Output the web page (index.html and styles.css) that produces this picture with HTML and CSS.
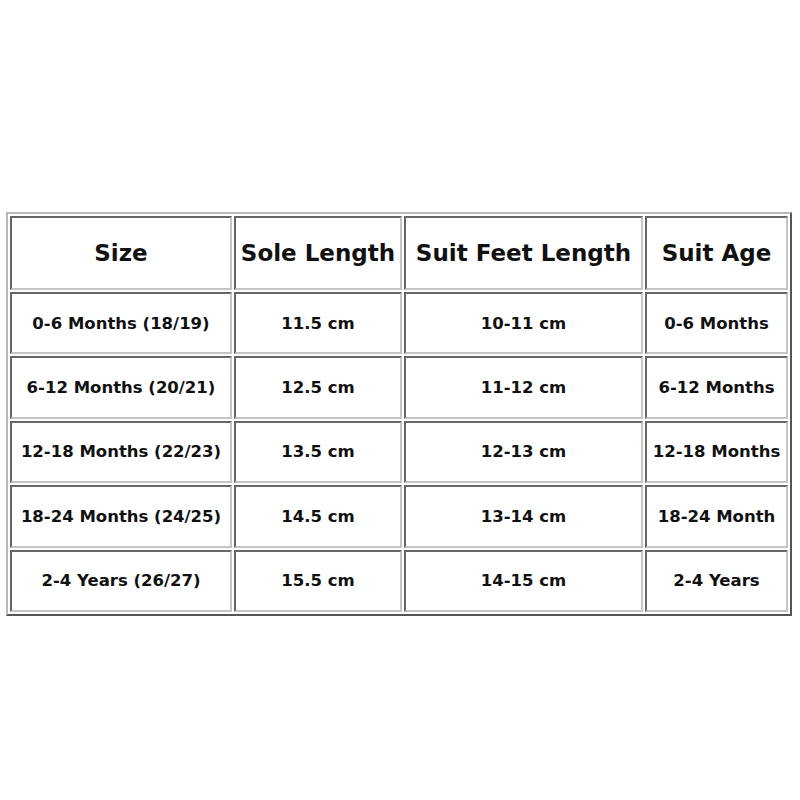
FILE: index.html
```html
<!DOCTYPE html>
<html>
<head>
<meta charset="utf-8">
<link rel="stylesheet" href="styles.css">
</head>
<body>
<div class="page">
  <table class="chart">
    <colgroup>
      <col class="c1"><col class="c2"><col class="c3"><col class="c4">
    </colgroup>
    <thead>
      <tr class="head">
        <th>Size</th>
        <th>Sole Length</th>
        <th>Suit Feet Length</th>
        <th>Suit Age</th>
      </tr>
    </thead>
    <tbody>
      <tr><td>0-6 Months (18/19)</td><td>11.5 cm</td><td>10-11 cm</td><td>0-6 Months</td></tr>
      <tr><td>6-12 Months (20/21)</td><td>12.5 cm</td><td>11-12 cm</td><td>6-12 Months</td></tr>
      <tr><td>12-18 Months (22/23)</td><td>13.5 cm</td><td>12-13 cm</td><td>12-18 Months</td></tr>
      <tr><td>18-24 Months (24/25)</td><td>14.5 cm</td><td>13-14 cm</td><td>18-24 Month</td></tr>
      <tr><td>2-4 Years (26/27)</td><td>15.5 cm</td><td>14-15 cm</td><td>2-4 Years</td></tr>
    </tbody>
  </table>
</div>
</body>
</html>
```
FILE: styles.css
```css
html, body {
  margin: 0;
  padding: 0;
  background: #ffffff;
}
.page {
  width: 800px;
  height: 800px;
  padding: 212px 0 0 6px;
  box-sizing: border-box;
}
.chart {
  width: 786px;
  border-collapse: separate;
  border-spacing: 2px;
  border: 2px solid;
  border-color: #b8b8b8 #555 #555 #b8b8b8;
  table-layout: fixed;
  font-family: "DejaVu Sans", sans-serif;
  font-weight: bold;
  color: #111;
}
.c1 { width: 222px; }
.c2 { width: 168px; }
.c3 { width: 239px; }
.c4 { width: 143px; }
.chart th, .chart td {
  border: 2px solid;
  border-color: #666 #c4c4c4 #c4c4c4 #666;
  text-align: center;
  padding: 0;
  white-space: nowrap;
}
.chart th {
  height: 70px;
  font-size: 23px;
}
.chart td {
  height: 58.4px;
  font-size: 16.5px;
}
```
